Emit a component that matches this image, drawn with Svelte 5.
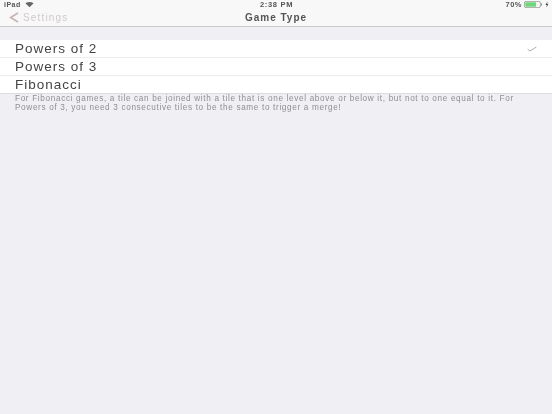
<script lang="ts">
  const types = ["Powers of 2", "Powers of 3", "Fibonacci"];
  let selected = $state(0);
</script>

<div class="screen">
  <header class="top">
    <div class="status">
      <span class="left">
        iPad
        <svg class="wifi" width="9" height="7" viewBox="0 0 10 7">
          <path d="M5 6.6 L0.4 2.2 Q5 -0.6 9.6 2.2 Z" fill="#666" />
        </svg>
      </span>
      <span class="time">2:38 PM</span>
      <span class="right">
        70%
        <svg width="19" height="7" viewBox="0 0 19 7">
          <rect x="0.4" y="0.4" width="16" height="6.2" rx="1.5" fill="none" stroke="#888" stroke-width="0.7" />
          <rect x="1.3" y="1.3" width="10.8" height="4.4" rx="0.6" fill="#6fd67c" />
          <rect x="17" y="2.3" width="1" height="2.4" fill="#999" />
        </svg>
        <svg width="4" height="7" viewBox="0 0 4 7">
          <path d="M2.4 0.4 L0.6 3.9 H1.8 L1.4 6.6 L3.4 2.9 H2.2 Z" fill="#444" />
        </svg>
      </span>
    </div>
    <nav class="bar">
      <button class="back">
        <svg width="10" height="11" viewBox="0 0 10 11">
          <path d="M9 1 L1.6 5.5 L9 10" fill="none" stroke="#c9b4b2" stroke-width="1.8" />
        </svg>
        Settings
      </button>
      <span class="title">Game Type</span>
    </nav>
  </header>

  <ul class="list">
    {#each types as type, i}
      <li>
        <button class="row" onclick={() => (selected = i)}>
          {type}
          {#if selected === i}
            <svg class="check" width="10" height="6" viewBox="0 0 10 6">
              <path d="M0.6 3.2 L3 5 L9.4 1" fill="none" stroke="#a5a5a8" stroke-width="0.9" />
            </svg>
          {/if}
        </button>
      </li>
    {/each}
  </ul>

  <p class="note">
    For Fibonacci games, a tile can be joined with a tile that is one level above or below it, but not to one equal to it. For Powers of 3, you need 3 consecutive tiles to be the same to trigger a merge!
  </p>
</div>

<style>
  :global(body) {
    margin: 0;
    background: #efeff4;
  }

  .screen {
    height: 414px;
    overflow: hidden;
    background: #efeff4;
    font-family: "Liberation Sans", Arial, sans-serif;
    filter: blur(0.4px);
  }

  .top {
    background: #f8f8f9;
    border-bottom: 1px solid #c9c9cc;
    height: 26px;
  }

  .status {
    display: flex;
    justify-content: space-between;
    align-items: center;
    height: 9px;
    padding: 0 3px 0 4px;
    font-size: 7px;
    font-weight: 700;
    letter-spacing: 0.5px;
    color: #555;
  }

  .left, .right {
    display: flex;
    align-items: center;
    gap: 4px;
    width: 80px;
  }

  .right {
    justify-content: flex-end;
    gap: 2px;
    font-size: 7.5px;
  }

  .time {
    font-size: 7.5px;
    letter-spacing: 0.7px;
  }

  .bar {
    position: relative;
    display: flex;
    align-items: center;
    justify-content: center;
    height: 17px;
  }

  .back {
    position: absolute;
    left: 9px;
    top: 3px;
    display: flex;
    align-items: center;
    gap: 4px;
    padding: 0;
    border: 0;
    background: none;
    font: inherit;
    font-size: 10px;
    letter-spacing: 1.15px;
    color: #cfcacb;
  }

  .title {
    font-size: 10px;
    font-weight: 700;
    letter-spacing: 1px;
    color: #555;
  }

  .list {
    list-style: none;
    margin: 13px 0 0;
    padding: 0;
    background: #fff;
    border-bottom: 1px solid #dcdce0;
  }

  li + li {
    border-top: 1px solid #ececee;
  }

  .row {
    display: flex;
    justify-content: space-between;
    align-items: center;
    width: 100%;
    height: 17px;
    padding: 0 15px;
    border: 0;
    background: none;
    font: inherit;
    font-size: 13.5px;
    letter-spacing: 1px;
    color: #444;
    text-align: left;
  }

  .note {
    margin: 1px 0 0;
    padding: 0 25px 0 15px;
    font-size: 8.2px;
    line-height: 8.5px;
    letter-spacing: 0.66px;
    color: #8f8f94;
  }
</style>
